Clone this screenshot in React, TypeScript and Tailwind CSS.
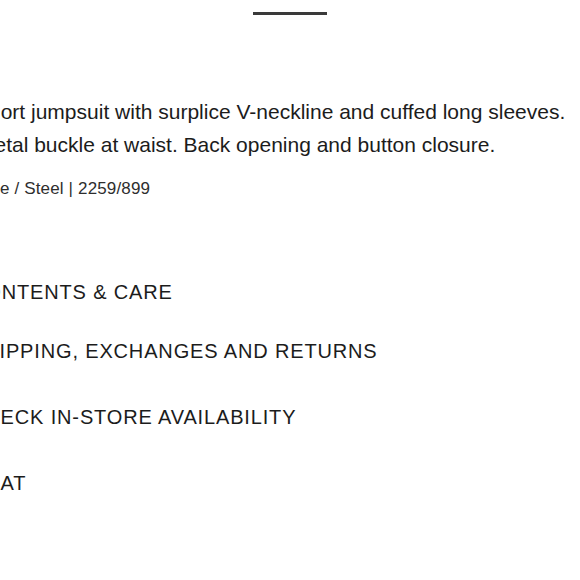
export default function App() {
  const headings = [
    { label: 'CONTENTS & CARE', gap: 'mt-[79px]' },
    { label: 'SHIPPING, EXCHANGES AND RETURNS', gap: 'mt-[35px]' },
    { label: 'CHECK IN-STORE AVAILABILITY', gap: 'mt-[42px]' },
    { label: 'CHAT', gap: 'mt-[42px]' },
  ];

  return (
    <div className="relative h-[580px] w-[580px] overflow-hidden bg-white font-['Liberation_Sans',Arial,sans-serif] text-[#1c1c1c]">
      <div className="flex justify-center pt-[12px]">
        <div className="h-[3px] w-[74px] bg-[#3a3a3a]" />
      </div>

      <div className="-ml-[25px] mt-[80px] whitespace-nowrap">
        <p className="text-[21px] leading-[33px]">
          <span className="block">Short jumpsuit with surplice V-neckline and cuffed long sleeves.</span>
          <span className="block pl-[2px]">Metal buckle at waist. Back opening and button closure.</span>
        </p>
        <p className="mt-[16px] text-[17px] leading-[24px] tracking-[0.15px] text-[#2e2e2e]">Blue / Steel | 2259/899</p>
      </div>

      <ul className="-ml-[30px] whitespace-nowrap">
        {headings.map((h) => (
          <li key={h.label} className={`${h.gap} text-[20px] leading-[24px] tracking-[0.85px]`}>
            {h.label}
          </li>
        ))}
      </ul>
    </div>
  );
}
